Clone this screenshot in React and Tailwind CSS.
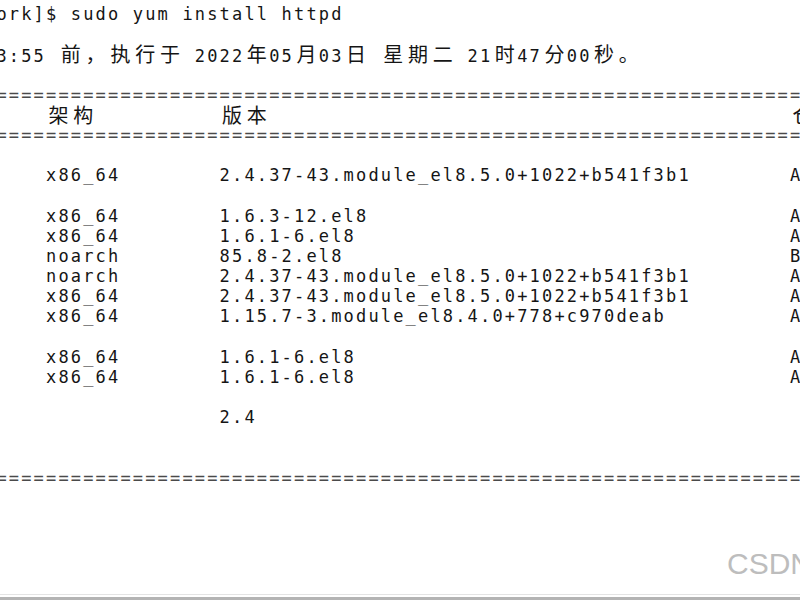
import React from 'react';

// terminal grid: one cell = 12.4px, CJK glyphs take two cells
const isWide = (ch) => ch.charCodeAt(0) > 0x2e80;

function Cells({ text }) {
  const parts = [];
  let buf = '';
  let k = 0;
  for (const ch of text) {
    if (isWide(ch)) {
      if (buf) {
        parts.push(<span key={k++}>{buf}</span>);
        buf = '';
      }
      parts.push(
        <span
          key={k++}
          className="inline-block w-[24.8px] text-center tracking-normal font-['Noto_Sans_CJK_SC',sans-serif] text-[20px] leading-[20px]"
        >
          {ch}
        </span>
      );
    } else {
      buf += ch;
    }
  }
  if (buf) parts.push(<span key={k++}>{buf}</span>);
  return <>{parts}</>;
}

function Line({ children, className = '' }) {
  return (
    <div className={`h-[20.17px] leading-[20.17px] whitespace-pre ${className}`}>
      {children}
    </div>
  );
}

function Row({ arch = '', version = '', repo = '' }) {
  return (
    <Line className="flex pl-[46px]">
      <span className="w-[173.6px] shrink-0"><Cells text={arch} /></span>
      <span className="w-[570.4px] shrink-0"><Cells text={version} /></span>
      <span className="shrink-0"><Cells text={repo} /></span>
    </Line>
  );
}

const Blank = () => <Line />;

const Rule = () => (
  <Line className="text-[#4a4a4a] -ml-[3.6px]">{'='.repeat(66)}</Line>
);

export default function App() {
  return (
    <div className="relative w-[800px] h-[600px] overflow-hidden bg-white flex flex-col">
      <div className="pt-[4px] text-[#151515] text-[17px] tracking-[2.165px] font-['DejaVu_Sans_Mono',monospace]">
        <Line className="-ml-[3.6px]"><Cells text="ork]$ sudo yum install httpd" /></Line>
        <Blank />
        <Line className="-ml-[3.6px]">
          <Cells text="3:55 前，执行于 2022年05月03日 星期二 21时47分00秒。" />
        </Line>
        <Blank />
        <Rule />
        <Row arch="架构" version="版本" repo="仓库" />
        <Rule />
        <Blank />
        <Row arch="x86_64" version="2.4.37-43.module_el8.5.0+1022+b541f3b1" repo="AppStream" />
        <Blank />
        <Row arch="x86_64" version="1.6.3-12.el8" repo="AppStream" />
        <Row arch="x86_64" version="1.6.1-6.el8" repo="AppStream" />
        <Row arch="noarch" version="85.8-2.el8" repo="BaseOS" />
        <Row arch="noarch" version="2.4.37-43.module_el8.5.0+1022+b541f3b1" repo="AppStream" />
        <Row arch="x86_64" version="2.4.37-43.module_el8.5.0+1022+b541f3b1" repo="AppStream" />
        <Row arch="x86_64" version="1.15.7-3.module_el8.4.0+778+c970deab" repo="AppStream" />
        <Blank />
        <Row arch="x86_64" version="1.6.1-6.el8" repo="AppStream" />
        <Row arch="x86_64" version="1.6.1-6.el8" repo="AppStream" />
        <Blank />
        <Row version="2.4" />
        <Blank />
        <Blank />
        <Rule />
      </div>

      <div className="mt-auto h-[1px] bg-[#e4e4e4]" />
      <div className="mt-[2px] h-[3px] bg-[#b4b4b4]" />

      {/* watermark */}
      <div className="absolute left-[727px] top-[549px] whitespace-pre text-[30px] leading-none text-[#bdbdbd] font-['Liberation_Sans',Arial,sans-serif]">
        CSDN @
      </div>
    </div>
  );
}
